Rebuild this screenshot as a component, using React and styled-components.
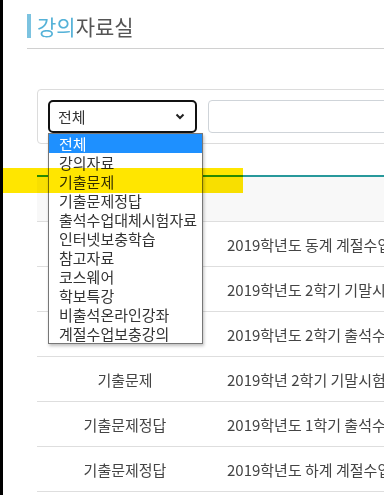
import styled, { createGlobalStyle } from 'styled-components';

const GlobalStyle = createGlobalStyle`
  html, body {
    margin: 0;
    padding: 0;
    overflow: hidden;
    background: #fff;
  }
  body {
    font-family: "Noto Sans CJK KR", "Noto Sans", sans-serif;
    color: #444;
  }
`;

const Page = styled.div`
  position: relative;
  display: flex;
  width: 900px;
  height: 495px;
`;

const Strip = styled.div`
  width: 3px;
  flex: none;
  background: #000;
`;

const Main = styled.div`
  flex: 1;
  padding: 14px 0 0 24px;
`;

const TitleBar = styled.h2`
  margin: 0;
  display: flex;
  align-items: center;
  gap: 6px;
  height: 24px;
  font-size: 21px;
  font-weight: 400;
  line-height: 24px;
  color: #555;
  padding-bottom: 10px;
  border-bottom: 1px solid #d0d0d0;
  &::before {
    content: '';
    width: 4px;
    height: 24px;
    background: #7cc3e0;
  }
`;

const Accent = styled.span`
  color: #55b2d8;
`;

const Content = styled.div`
  margin-left: 10px;
`;

const FilterBox = styled.div`
  position: relative;
  margin-top: 40px;
  display: flex;
  gap: 11px;
  padding: 10px;
  border: 1px solid #dcdcdc;
  border-radius: 4px;
`;

const Select = styled.div`
  box-sizing: border-box;
  width: 149px;
  height: 33px;
  display: flex;
  align-items: center;
  justify-content: space-between;
  padding: 0 10px 0 8px;
  border: 2px solid #111;
  border-radius: 5px;
  font-size: 15px;
  color: #333;
`;

const Input = styled.div`
  box-sizing: border-box;
  width: 500px;
  height: 33px;
  border: 1px solid #cfd4d9;
  border-radius: 4px;
`;

const Dropdown = styled.ul`
  position: absolute;
  left: 10px;
  top: 43px;
  z-index: 5;
  box-sizing: border-box;
  width: 155px;
  margin: 0;
  padding: 0;
  list-style: none;
  background: #fff;
  border: 1px solid #777;
  box-shadow: 1px 2px 3px rgba(0, 0, 0, 0.25);
`;

const Option = styled.li`
  height: 19px;
  line-height: 19px;
  padding-left: 10px;
  font-size: 15px;
  white-space: nowrap;
  color: ${(p) => (p.$active ? '#fff' : '#333')};
  background: ${(p) => (p.$active ? '#1e90ff' : 'transparent')};
`;

const Table = styled.div`
  margin-top: 31px;
  border-top: 2px solid #27999b;
`;

const Head = styled.div`
  height: 44px;
  background: #f8f8f8;
  border-bottom: 1px solid #dedede;
`;

const Row = styled.div`
  display: flex;
  align-items: center;
  height: 44px;
  border-bottom: 1px solid #dedede;
  font-size: 15px;
  color: #444;
  white-space: nowrap;
`;

const Kind = styled.div`
  width: 176px;
  flex: none;
  text-align: center;
`;

const Subject = styled.div`
  padding-left: 14px;
`;

const Highlight = styled.div`
  position: absolute;
  left: 3px;
  top: 168px;
  width: 240px;
  height: 25px;
  background: #ffe600;
  mix-blend-mode: multiply;
  z-index: 10;
  pointer-events: none;
`;

const options = [
  '전체',
  '강의자료',
  '기출문제',
  '기출문제정답',
  '출석수업대체시험자료',
  '인터넷보충학습',
  '참고자료',
  '코스웨어',
  '학보특강',
  '비출석온라인강좌',
  '계절수업보충강의',
];

const rows = [
  ['기출문제', '2019학년도 동계 계절수업 기출문제'],
  ['기출문제', '2019학년도 2학기 기말시험 기출문제'],
  ['기출문제', '2019학년도 2학기 출석수업대체시험 기출문제'],
  ['기출문제', '2019학년 2학기 기말시험 기출문제'],
  ['기출문제정답', '2019학년도 1학기 출석수업대체시험 정답'],
  ['기출문제정답', '2019학년도 하계 계절수업 정답'],
];

export default function App() {
  return (
    <>
      <GlobalStyle />
      <Page>
        <Strip />
        <Main>
          <TitleBar>
            <span>
              <Accent>강의</Accent>자료실
            </span>
          </TitleBar>
          <Content>
            <FilterBox>
              <Select>
                <span>전체</span>
                <svg width="10" height="7" viewBox="0 0 10 7">
                  <path d="M1.5 1.5 L5 5 L8.5 1.5" fill="none" stroke="#222" strokeWidth="2" />
                </svg>
              </Select>
              <Input />
              <Dropdown>
                {options.map((o, i) => (
                  <Option key={o} $active={i === 0}>
                    {o}
                  </Option>
                ))}
              </Dropdown>
            </FilterBox>
            <Table>
              <Head />
              {rows.map(([k, s], i) => (
                <Row key={i}>
                  <Kind>{k}</Kind>
                  <Subject>{s}</Subject>
                </Row>
              ))}
            </Table>
          </Content>
        </Main>
        <Highlight />
      </Page>
    </>
  );
}
